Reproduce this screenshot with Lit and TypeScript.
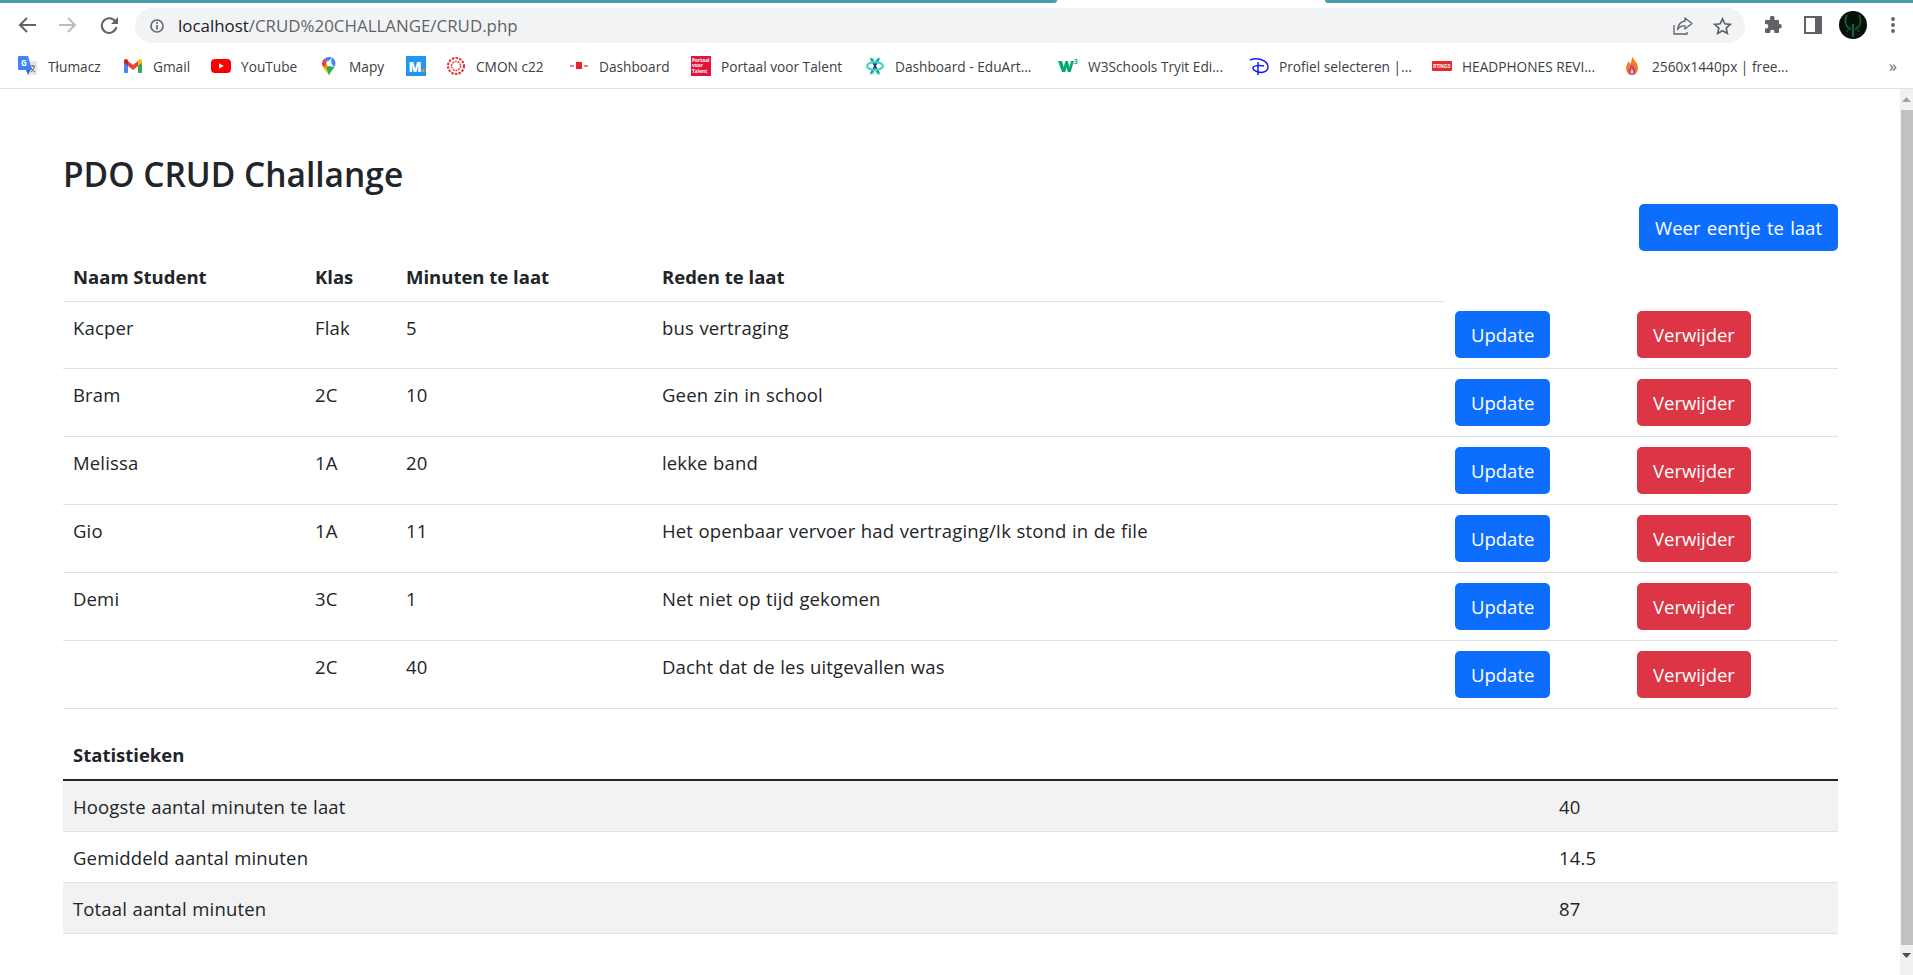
import { LitElement, html, css } from "lit";
import { customElement } from "lit/decorators.js";

const icons: Record<string, unknown> = {
  translate: html`<svg viewBox="0 0 20 20" width="20" height="20"><path d="M8 5h10a1 1 0 0 1 1 1v13H10z" fill="#e3e5e8"/><path d="M12 10h5M14.5 9v1M13 16c2-1.500 3-3.500 3.200-6M13 11.500c.8 2 2 3.500 4 4.500" stroke="#5f6f86" stroke-width="1" fill="none"/><path d="M1 0h9l4 14H1a1 1 0 0 1-1-1V1a1 1 0 0 1 1-1z" fill="#4285f4"/><path d="M8 14l2 5 2.500-5z" fill="#3367d6"/><text x="3" y="10" font-size="8" font-weight="700" fill="#fff" font-family="Open Sans">G</text></svg>`,
  gmail: html`<svg viewBox="0 0 20 20" width="20" height="20"><path d="M1 5v11a1 1 0 0 0 1 1h3V8z" fill="#4285f4"/><path d="M19 5v11a1 1 0 0 1-1 1h-3V8z" fill="#34a853"/><path d="M5 5v5l5 4 5-4V5l-5 4z" fill="#ea4335"/><path d="M1 5c0-2 2-2.500 3-1.600L5 4.200V10L1 6.800z" fill="#c5221f"/><path d="M19 5c0-2-2-2.500-3-1.600l-1 .8V10l4-3.200z" fill="#fbbc04"/></svg>`,
  youtube: html`<svg viewBox="0 0 20 20" width="20" height="20"><rect x="0" y="3" width="20" height="14" rx="4" fill="#f00"/><path d="M8 7.200v5.600l4.800-2.800z" fill="#fff"/></svg>`,
  maps: html`<svg viewBox="0 0 20 20" width="20" height="20"><path d="M10 19.500c-1-3-5.800-6.500-6.800-10L8 8z" fill="#fbbc04"/><path d="M10 19.500c1.500-4 3.500-5 5.500-8.500L10 10l-3 .5z" fill="#34a853"/><path d="M3.200 9.500C2.500 7 3.400 4.500 5 3l4 4-3 4z" fill="#ea4335"/><path d="M5 3c2.500-2.500 6-2.500 8-1.500L8 7z" fill="#4285f4"/><path d="M13 1.500c3 1.500 4.500 5.500 2.500 9.500L11.500 7z" fill="#4285f4"/><circle cx="10" cy="7.500" r="2.700" fill="#fff"/></svg>`,
  m: html`<svg viewBox="0 0 20 20" width="20" height="20"><rect width="20" height="20" fill="#2196f3"/><text x="2.500" y="15.500" font-size="13.500" font-weight="800" fill="#fff" font-family="Open Sans">M</text><rect x="15.500" y="13" width="3" height="3" fill="#f28c28"/></svg>`,
  cmon: html`<svg viewBox="0 0 20 20" width="20" height="20"><circle cx="10" cy="10" r="8" fill="none" stroke="#e53935" stroke-width="2.200" stroke-dasharray="2.500 1.200"/><circle cx="10" cy="10" r="4.500" fill="none" stroke="#e53935" stroke-width="1.500" stroke-dasharray="1.800 1"/></svg>`,
  dash: html`<svg viewBox="0 0 20 20" width="20" height="20"><rect x="7" y="6" width="6" height="7" fill="#e8212e"/><rect x="1" y="9" width="4" height="2" fill="#ef7a80"/><rect x="15" y="9" width="4" height="2" fill="#ef7a80"/></svg>`,
  portaal: html`<svg viewBox="0 0 20 20" width="20" height="20"><rect width="20" height="20" fill="#e2143c"/><g font-size="4.800" font-weight="700" fill="#fff" font-family="Open Sans"><text x="1" y="5.500">Portaal</text><text x="1" y="11">voor</text><text x="1" y="16.500">Talent</text></g></svg>`,
  edu: html`<svg viewBox="0 0 20 20" width="20" height="20"><g fill="none" stroke-linecap="round"><path d="M6.500 3l7 14M13.500 3l-7 14" stroke="#1f3a93" stroke-width="1.800"/><ellipse cx="10" cy="10" rx="8" ry="3.800" stroke="#3fd6b8" stroke-width="2.200"/><path d="M5.500 2.500c1.500-.5 2.500.5 3 2M14.500 2.500c-1.500-.5-2.500.5-3 2M5.500 17.500c1.500.5 2.500-.5 3-2M14.500 17.500c-1.500.5-2.500-.5-3-2" stroke="#3fd6b8" stroke-width="1.800"/></g></svg>`,
  w3: html`<svg viewBox="0 0 20 20" width="20" height="20"><path d="M0 5h4l1.700 6 1.700-6h2.400l1.700 6L13 5h3l-3.300 11H9.700L8.600 11.500 7.300 16H4z" fill="#04aa6d"/><text x="16" y="7.500" font-size="6.500" font-weight="700" fill="#04aa6d" font-family="Open Sans">3</text></svg>`,
  disney: html`<svg viewBox="0 0 20 20" width="20" height="20"><g fill="none" stroke="#1a1aff" stroke-width="1.500"><path d="M1 4C8 1 19 4 19 11c0 5-6 6-10 5-3-.8-5-2-5-4 0-2 4-3 11-2"/><path d="M9 6v13"/></g></svg>`,
  rtings: html`<svg viewBox="0 0 20 20" width="20" height="20"><rect x="0" y="5" width="20" height="10" rx="1" fill="#e32b2b"/><text x="1.200" y="12" font-size="4.600" font-weight="700" fill="#fff" font-family="Liberation Sans">RTINGS</text></svg>`,
  fire: html`<svg viewBox="0 0 20 20" width="20" height="20"><path d="M10 0c1 4 6 6 6 12a6 7 0 0 1-12 0c0-3 2-4 2-7 1 1 1.500 2 2 3 1.500-2 2-5 2-8z" fill="#f57c1f"/><path d="M10 8c.5 3 3.500 4 3.500 7a3.500 4 0 0 1-7 0c0-2 1.500-2.500 2-4z" fill="#b83aa8"/><path d="M10 12c.3 2 1.500 2.500 1.500 4a1.500 2 0 0 1-3 0c0-1.500 1-2 1.500-4z" fill="#ffd23f"/></svg>`,
};

const bookmarks = [
  { i: "translate", t: "Tłumacz", w: 105 },
  { i: "gmail", t: "Gmail", w: 88 },
  { i: "youtube", t: "YouTube", w: 108 },
  { i: "maps", t: "Mapy", w: 87 },
  { i: "m", t: "", w: 40 },
  { i: "cmon", t: "CMON c22", w: 123 },
  { i: "dash", t: "Dashboard", w: 122 },
  { i: "portaal", t: "Portaal voor Talent", w: 174 },
  { i: "edu", t: "Dashboard - EduArt...", w: 193 },
  { i: "w3", t: "W3Schools Tryit Edi...", w: 191 },
  { i: "disney", t: "Profiel selecteren |...", w: 183 },
  { i: "rtings", t: "HEADPHONES REVI...", w: 190 },
  { i: "fire", t: "2560x1440px | free...", w: 190 },
];

const students = [
  ["Kacper", "Flak", "5", "bus vertraging"],
  ["Bram", "2C", "10", "Geen zin in school"],
  ["Melissa", "1A", "20", "lekke band"],
  ["Gio", "1A", "11", "Het openbaar vervoer had vertraging/Ik stond in de file"],
  ["Demi", "3C", "1", "Net niet op tijd gekomen"],
  ["", "2C", "40", "Dacht dat de les uitgevallen was"],
];

const stats = [
  ["Hoogste aantal minuten te laat", "40"],
  ["Gemiddeld aantal minuten", "14.5"],
  ["Totaal aantal minuten", "87"],
];

@customElement("app-root")
export class AppRoot extends LitElement {
  static styles = css`
    :host { display: flex; flex-direction: column; height: 975px; overflow: hidden; background: #fff; color: #212529; font-family: "Open Sans", sans-serif; }
    .strip { display: flex; height: 3px; flex: none; }
    .strip-l { width: 1057px; background: #4a9cae; border-bottom-right-radius: 5px; }
    .strip-r { margin-left: auto; width: 588px; background: #4a9cae; border-bottom-left-radius: 5px; }
    .toolbar { display: flex; align-items: center; height: 41px; box-sizing: border-box; padding: 3px 0 0 6px; flex: none; }
    .tb { width: 41px; height: 35px; display: flex; align-items: center; justify-content: center; flex: none; }
    .omni { flex: 1; margin-left: 6px; margin-top: 1px; height: 35px; border-radius: 18px; background: #f1f3f4; display: flex; align-items: center; padding: 0 13px 0 15px; }
    .url { margin-left: 14px; font-size: 16.900px; color: #5f6368; white-space: nowrap; }
    .url b { font-weight: 400; color: #202124; }
    .omni-r { margin-left: auto; display: flex; align-items: center; gap: 20px; }
    .tools { display: flex; margin-left: 8px; }
    .tools .tb { width: 40px; }
    .bar { display: flex; align-items: center; height: 44px; padding-left: 18px; border-bottom: 1px solid #e1e2e3; flex: none; box-sizing: content-box; }
    .bm { display: flex; align-items: center; gap: 10px; font-size: 13.700px; color: #3c4043; white-space: nowrap; flex: none; }
    .bm svg { flex: none; }
    .more { margin-left: auto; padding-right: 16px; color: #5f6368; font-size: 16px; }
    .page { flex: 1; display: flex; min-height: 0; }
    main { flex: 1; padding: 0 62px 0 63px; min-width: 0; }
    h2 { margin: 0; padding-top: 64px; font-size: 33.500px; line-height: 42px; font-weight: 600; }
    .add-row { display: flex; justify-content: flex-end; margin-top: 9px; }
    .btn { display: block; height: 47px; box-sizing: border-box; padding: 1px 16px 0; border: 0; border-radius: 5px; font: inherit; font-size: 18.500px; line-height: 46px; color: #fff; letter-spacing: 0; word-spacing: 1.500px; }
    .blue { background: #0d6efd; }
    .red { background: #dc3545; }
    table { border-collapse: collapse; table-layout: fixed; width: 1775px; font-size: 18.500px; line-height: 30px; }
    th { text-align: left; font-weight: 700; padding: 11px 10px 9px; height: 30px; }
    td { padding: 11px 10px 9px; vertical-align: top; border-bottom: 1px solid #dee2e6; letter-spacing: .15px; word-spacing: .5px; }
    td.act { padding: 10px; }
    tbody tr:first-child td.act { padding-top: 9px; }
    thead .ln { border-bottom: 1px solid #dee2e6; }
    .c1 { width: 242px; } .c2 { width: 91px; } .c3 { width: 256px; } .c4 { width: 793px; } .c5 { width: 182px; } .c6 { width: 211px; }
    .stats { margin-top: 21px; }
    .stats thead th { border-bottom: 2px solid #212529; padding: 10px 10px 9px; }
    .stats tbody tr { height: 51px; }
    .stats tbody tr:nth-child(odd) td { background: #f2f2f2; }
    .s1 { width: 1486px; }
    .scroll { width: 13px; background: #f1f1f1; flex: none; display: flex; flex-direction: column; align-items: center; }
    .arrow { width: 13px; height: 21px; flex: none; display: flex; align-items: center; justify-content: center; }
    .end { height: 9px; }
    .thumb { flex: 1; width: 12px; margin-left: 1px; background: #c1c1c1; }
  `;

  render() {
    return html`
      <div class="strip"><div class="strip-l"></div><div class="strip-r"></div></div>
      <div class="toolbar">
        <div class="tb"><svg width="18" height="16" viewBox="0 0 18 16" fill="none" stroke="#5f6368" stroke-width="2"><path d="M18 8H2M9 1 2 8l7 7"/></svg></div>
        <div class="tb"><svg width="18" height="16" viewBox="0 0 18 16" fill="none" stroke="#babcbe" stroke-width="2"><path d="M0 8h16M9 1l7 7-7 7"/></svg></div>
        <div class="tb"><svg width="18" height="17" viewBox="0 0 18 17" fill="none"><path d="M15.500 5A7.300 7.300 0 1 0 16.300 10" stroke="#5f6368" stroke-width="2"/><path d="M18 0v7h-7z" fill="#5f6368"/></svg></div>
        <div class="omni">
          <svg width="14" height="14" viewBox="0 0 14 14" fill="none"><circle cx="7" cy="7" r="6" stroke="#5f6368" stroke-width="1.600"/><path d="M7 6v4.500" stroke="#5f6368" stroke-width="1.600"/><circle cx="7" cy="4" r="1" fill="#5f6368"/></svg>
          <span class="url"><b>localhost</b>/CRUD%20CHALLANGE/CRUD.php</span>
          <div class="omni-r">
            <svg width="20" height="18" viewBox="0 0 20 18" fill="none" stroke="#5f6368" stroke-width="1.300"><path d="M1 8v9h13v-2"/><path d="M12 1l7 5.500-7 5.500V9c-3.500-.3-6 1-7.500 4C5 8 7.500 4.500 12 4z"/></svg>
            <svg width="19" height="18" viewBox="0 0 19 18" fill="none" stroke="#5f6368" stroke-width="1.700"><path d="M9.500 1.800l2.300 5 5.400.6-4 3.700 1.100 5.300-4.800-2.700-4.800 2.700 1.100-5.300-4-3.700 5.400-.6z"/></svg>
          </div>
        </div>
        <div class="tools">
          <div class="tb"><svg width="18" height="18" viewBox="0 0 18 18" fill="#5f6368"><path d="M6 1.500a2.300 2.300 0 0 1 4.500 0V4H14a1 1 0 0 1 1 1v3h.5a2.300 2.300 0 0 1 0 4.600H15V16a1 1 0 0 1-1 1h-3.500v-1a2.200 2.200 0 0 0-4.400 0v1H2a1 1 0 0 1-1-1v-3.500h1a2.300 2.300 0 0 0 0-4.600H1V5a1 1 0 0 1 1-1h4z"/></svg></div>
          <div class="tb"><svg width="18" height="18" viewBox="0 0 18 18" fill="none"><rect x="1" y="1" width="16" height="16" stroke="#5f6368" stroke-width="2"/><rect x="11" y="1" width="6" height="16" fill="#5f6368"/></svg></div>
          <div class="tb"><svg width="28" height="28" viewBox="0 0 28 28"><circle cx="14" cy="14" r="14" fill="#06100a"/><g fill="none" stroke="#1a6334" stroke-width="1.500"><path d="M8 4C5 9 6 16 12 18.500M20 4c3 5 2 12-4 14.500"/><path d="M14 13v13" stroke-width="2.200"/><path d="M11 15l-3 6M17 15l3 6" stroke="#124d27"/></g></svg></div>
          <div class="tb"><svg width="4" height="16" viewBox="0 0 4 16" fill="#5f6368"><circle cx="2" cy="2" r="1.900"/><circle cx="2" cy="8" r="1.900"/><circle cx="2" cy="14" r="1.900"/></svg></div>
        </div>
      </div>
      <div class="bar">
        ${bookmarks.map((b) => html`<div class="bm" style="width:${b.w}px">${icons[b.i]}${b.t ? html`<span>${b.t}</span>` : ""}</div>`)}
        <div class="more">»</div>
      </div>
      <div class="page">
        <main>
          <h2>PDO CRUD Challange</h2>
          <div class="add-row"><button class="btn blue">Weer eentje te laat</button></div>
          <table>
            <colgroup><col class="c1" /><col class="c2" /><col class="c3" /><col class="c4" /><col class="c5" /><col class="c6" /></colgroup>
            <thead>
              <tr>
                <th class="ln">Naam Student</th><th class="ln">Klas</th><th class="ln">Minuten te laat</th><th class="ln">Reden te laat</th><th></th><th></th>
              </tr>
            </thead>
            <tbody>
              ${students.map((s) => html`
                <tr>
                  ${s.map((v) => html`<td>${v}</td>`)}
                  <td class="act"><button class="btn blue">Update</button></td>
                  <td class="act"><button class="btn red">Verwijder</button></td>
                </tr>`)}
            </tbody>
          </table>
          <table class="stats">
            <colgroup><col class="s1" /><col /></colgroup>
            <thead><tr><th>Statistieken</th><th></th></tr></thead>
            <tbody>
              ${stats.map((r) => html`<tr><td>${r[0]}</td><td>${r[1]}</td></tr>`)}
            </tbody>
          </table>
        </main>
        <div class="scroll">
          <div class="arrow"><svg width="9" height="5" viewBox="0 0 9 5"><path d="M4.500 0 9 5H0z" fill="#a3a3a3"/></svg></div>
          <div class="thumb"></div>
          <div class="arrow"><svg width="9" height="5" viewBox="0 0 9 5"><path d="M0 0h9L4.500 5z" fill="#505050"/></svg></div>
          <div class="arrow end"></div>
        </div>
      </div>
    `;
  }
}
